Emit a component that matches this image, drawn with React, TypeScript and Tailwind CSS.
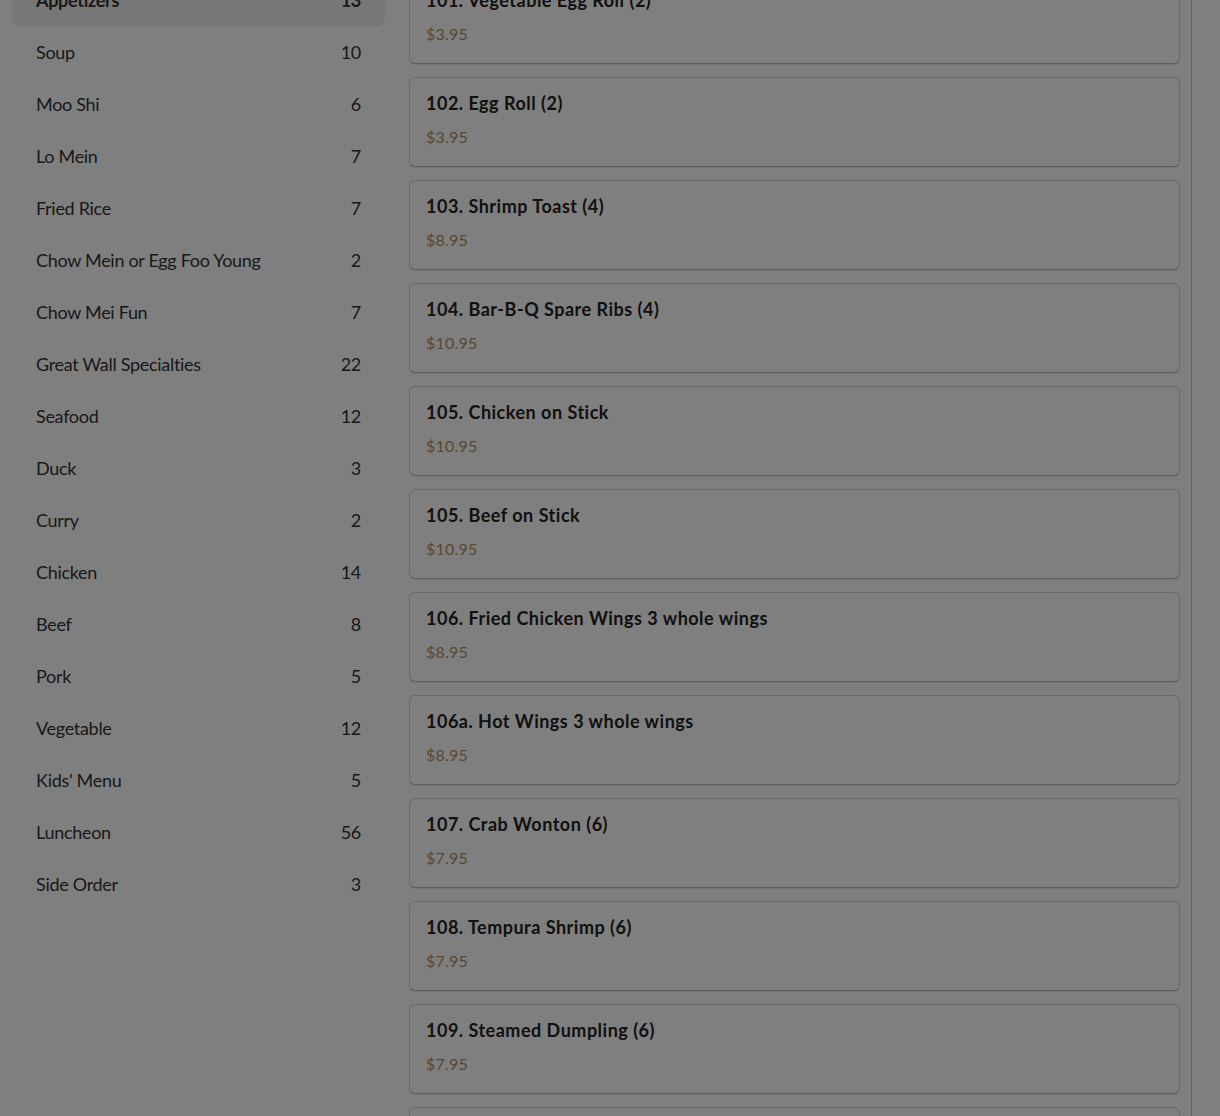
const categories = [
  { name: "Appetizers", count: 13 },
  { name: "Soup", count: 10 },
  { name: "Moo Shi", count: 6 },
  { name: "Lo Mein", count: 7 },
  { name: "Fried Rice", count: 7 },
  { name: "Chow Mein or Egg Foo Young", count: 2 },
  { name: "Chow Mei Fun", count: 7 },
  { name: "Great Wall Specialties", count: 22 },
  { name: "Seafood", count: 12 },
  { name: "Duck", count: 3 },
  { name: "Curry", count: 2 },
  { name: "Chicken", count: 14 },
  { name: "Beef", count: 8 },
  { name: "Pork", count: 5 },
  { name: "Vegetable", count: 12 },
  { name: "Kids' Menu", count: 5 },
  { name: "Luncheon", count: 56 },
  { name: "Side Order", count: 3 },
];

const items = [
  { name: "101. Vegetable Egg Roll (2)", price: "$3.95" },
  { name: "102. Egg Roll (2)", price: "$3.95" },
  { name: "103. Shrimp Toast (4)", price: "$8.95" },
  { name: "104. Bar-B-Q Spare Ribs (4)", price: "$10.95" },
  { name: "105. Chicken on Stick", price: "$10.95" },
  { name: "105. Beef on Stick", price: "$10.95" },
  { name: "106. Fried Chicken Wings 3 whole wings", price: "$8.95" },
  { name: "106a. Hot Wings 3 whole wings", price: "$8.95" },
  { name: "107. Crab Wonton (6)", price: "$7.95" },
  { name: "108. Tempura Shrimp (6)", price: "$7.95" },
  { name: "109. Steamed Dumpling (6)", price: "$7.95" },
  { name: "110. Fried Dumpling (6)", price: "$7.95" },
];

export default function App() {
  return (
    <div className="relative h-screen overflow-hidden bg-white font-['Lato','Noto_Sans',sans-serif] text-[#333]">
      <div className="-mt-[26px] flex">
        {/* Category list */}
        <aside className="w-[385px] shrink-0 pl-3">
          <ul>
            {categories.map((c, i) => (
              <li
                key={c.name}
                className={`flex h-[52px] items-center justify-between rounded-lg px-6 text-[18px] tracking-[-0.3px] ${
                  i === 0 ? "bg-[#f0efee] font-bold" : ""
                }`}
              >
                <span>{c.name}</span>
                <span>{c.count}</span>
              </li>
            ))}
          </ul>
        </aside>

        {/* Menu items */}
        <main className="ml-6 w-[783px] shrink-0 border-r border-[#c4c4c4] pr-[11px]">
          <div className="flex flex-col gap-[13px]">
            {items.map((item) => (
              <div
                key={item.name}
                className="flex h-[90px] flex-col rounded-md border border-[#d2d2d2] border-b-[#bdbdbd] px-4 pt-[13px] shadow-[0_1px_1px_rgba(0,0,0,0.08)]"
              >
                <h3 className="text-[18px] font-bold leading-6 tracking-[0.5px] text-[#222]">{item.name}</h3>
                <p className="mt-[10px] text-[16px] leading-6 tracking-[0.2px] text-[#b08f64]">{item.price}</p>
              </div>
            ))}
          </div>
        </main>
      </div>

      {/* Modal backdrop */}
      <div className="fixed inset-0 bg-black/50" />
    </div>
  );
}
